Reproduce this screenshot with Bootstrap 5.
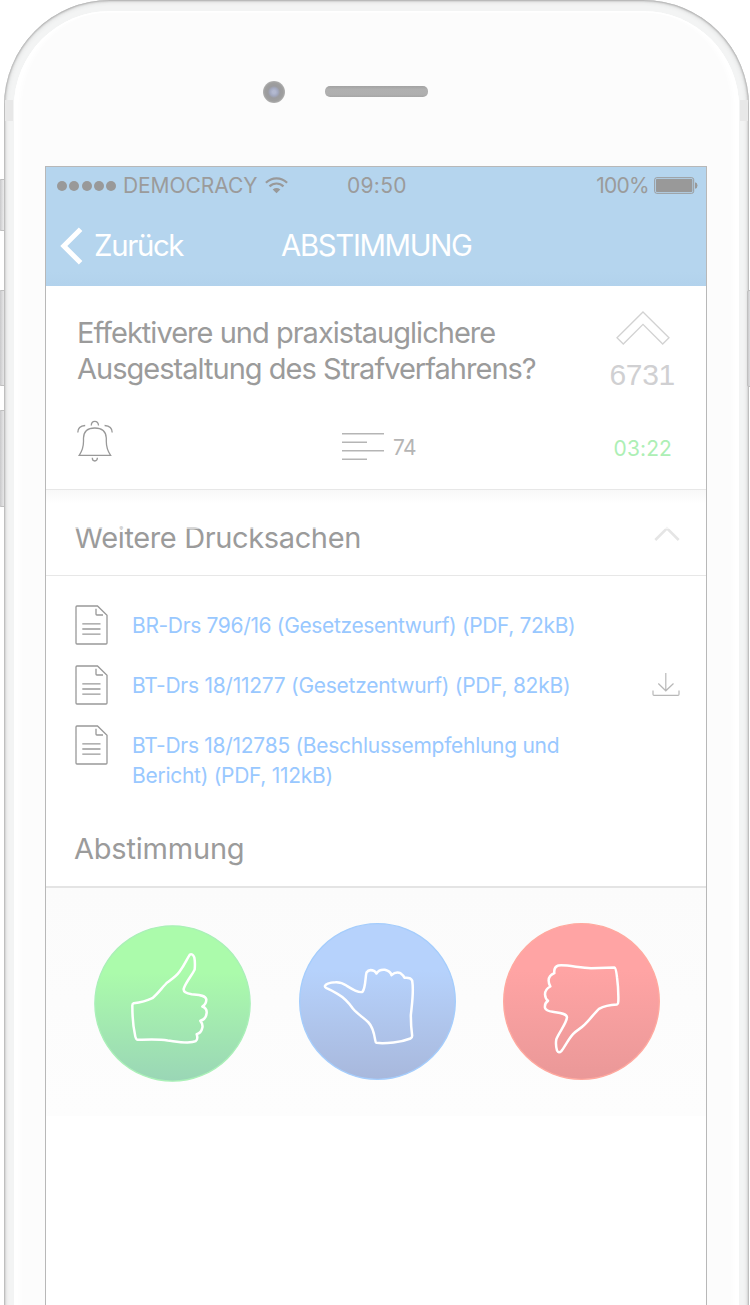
<!DOCTYPE html>
<html lang="de">
<head>
<meta charset="utf-8">
<meta name="viewport" content="width=device-width, initial-scale=1">
<title>Abstimmung</title>
<link rel="stylesheet" href="https://cdn.jsdelivr.net/npm/bootstrap@5.3.0/dist/css/bootstrap.min.css">
<style>
body{font-family:Inter,"Liberation Sans",sans-serif;font-weight:400;color:#9b9b9b;background:#fff;height:1305px;overflow:hidden}
.stage{height:1305px}
.phone{margin:0 1px 0 4px;height:1330px;border-radius:106px 106px 0 0;padding:11px 10px 0;background:#f3f4f4;
 box-shadow:inset 2px 0 2px -1px #b5b5b5,inset -2px 0 2px -1px #b5b5b5,inset 0 2px 2px -1px #b0b0b0,inset 0 0 5px 1px #d2d3d3}
.face{height:1319px;border-radius:96px 96px 0 0;background:#fcfcfc;padding:0 32px 0 31px;box-shadow:inset 0 0 0 1.5px #fff,inset 9px 0 5px -3px #fff,inset -9px 0 5px -3px #fff}
.optics{height:155px;padding:70px 0 0 218px;gap:40px}
.camera{width:22px;height:22px;border-radius:50%;background:radial-gradient(circle,#b3b9d0 0 1.5px,#a2a8bf 4px,#9b9b9e 6px,#9e9e9e 9px,#b0b0b0 11px)}
.speaker{width:103px;height:11px;border-radius:5px;margin-top:5px;background:linear-gradient(#a2a2a2,#b0b0b0 30%,#afafaf 75%,#a6a6a6)}
.band{top:100px;width:8px;height:21px;background:#e8e8e8}
.key{background:linear-gradient(90deg,#c9c9cb,#dededf 45%,#e9e9ea 75%,#bcbcbc);border:1px solid #c0c0c0;border-radius:2px}
.screen{height:1165px;border:1px solid #b8b8b8;border-bottom:0;background:#fff}
.topbar{height:119px;background:linear-gradient(#b5d5ee 0 88%,#b2d2ec)}
.status{height:36px;font-size:21px;line-height:36px;padding:1px 8px 0 11px}
.status-left{width:290px}
.dots{gap:2.35px;margin-right:6.5px}
.dots i{width:10px;height:10px;border-radius:50%;background:#999}
.carrier{letter-spacing:-.034px}
.clock{letter-spacing:.3px}
.percent{letter-spacing:-.7px;margin-right:5px}
.navi{height:83px;padding:2px 0 0 14px;font-size:29.3px;color:#fff}
.back{width:221px;color:#fff;letter-spacing:-1.3px;gap:10px}
.heading{letter-spacing:-1.3px}
.summary{height:203px}
.summary-top{height:110px;padding:25px 29px 0 31px}
.question{font-size:29px;line-height:36px;padding-top:4px;letter-spacing:-.98px}
.votes{font:30px/34px "Liberation Sans",sans-serif;color:#d0d0d2;margin-top:13px;letter-spacing:-.3px;margin-right:2px}
.summary-bottom{padding:24px 34px 0 31px;font-size:21px}
.comments{color:#b5b5b5;line-height:32px;margin:12px 0 0 229px;gap:8px;letter-spacing:-.6px}
.left-time{color:#adefb5;line-height:32px;margin-top:13px;letter-spacing:.1px}
.acc-head{height:87px;border-top:1px solid #e7e7e7;border-bottom:1px solid #e7e7e7;padding:11px 26px 0 28.5px;font-size:29px;letter-spacing:-.37px;background:linear-gradient(#f8f8f8,#fff 13px)}
.acc-head::before{content:"";position:absolute;left:0;right:0;top:14px;height:25px;background:linear-gradient(#fff8,#fff9)}
.docs{height:239px;padding:29px 26px 0 29px}
.doc{min-height:60px;font-size:21px;line-height:30px;letter-spacing:-.28px;gap:24px}
.doc a{color:#99c8ff;padding-top:5.5px}
.doc svg{flex:none}
.vote-head{height:73px;border-bottom:2px solid #e4e4e4;padding:0 28px 4px;font-size:29px;letter-spacing:-.2px}
.ballot{height:228px;background:linear-gradient(#fbfbfb,#fdfdfd);padding:35px 0 0 48px;gap:47.7px}
.ballot button{width:157px;height:157px}
</style>
</head>
<body>
<div class="stage position-relative overflow-hidden">
  <span class="key position-absolute" style="left:-1px;top:179px;width:7px;height:52px"></span>
  <span class="key position-absolute" style="left:-1px;top:290px;width:8px;height:96px"></span>
  <span class="key position-absolute" style="left:-1px;top:410px;width:8px;height:97px"></span>
  <main class="phone position-relative">
    <span class="band position-absolute" style="left:1px"></span><span class="band position-absolute" style="right:1px"></span>
    <div class="face">
      <div class="optics d-flex"><span class="camera"></span><span class="speaker"></span></div>
      <div class="screen">
        <header class="topbar">
          <div class="status d-flex align-items-center">
            <div class="status-left d-flex align-items-center">
              <span class="dots d-flex"><i></i><i></i><i></i><i></i><i></i></span>
              <span class="carrier">DEMOCRACY</span>
              <svg style="margin-left:7px" width="23" height="17" viewBox="0 0 23 17" fill="none" stroke="#999" stroke-width="2.2"><path d="M.9 5.8Q5.5 1.3 11.5 1.3T22.1 5.8M4.5 9.4Q7.5 6.5 11.5 6.5T18.5 9.4"/><path d="M7.7 12.5Q11.5 9.6 15.3 12.5L11.5 16.3Z" fill="#999" stroke="none"/></svg>
            </div>
            <span class="clock">09:50</span>
            <span class="percent ms-auto">100%</span>
            <svg width="44" height="17" viewBox="0 0 44 17"><rect x=".7" y=".7" width="39" height="15.6" rx="2" fill="none" stroke="#999" stroke-width="1"/><rect x="2" y="2" width="36.4" height="13" rx=".8" fill="#999"/><path d="M41 5.3q2.5.4 2.5 3.2T41 11.7Z" fill="#999"/></svg>
          </div>
          <nav class="navi d-flex align-items-center">
            <a class="back d-flex align-items-center text-decoration-none" href="#"><svg width="24" height="38" viewBox="0 0 24 38" fill="none" stroke="#fff" stroke-width="5"><path d="M20.6 2.2 3.8 19 20.6 35.8"/></svg>Zurück</a>
            <span class="heading">ABSTIMMUNG</span>
          </nav>
        </header>
        <section class="summary">
          <div class="summary-top d-flex justify-content-between">
            <div class="question">Effektivere und praxistauglichere<br>Ausgestaltung des Strafverfahrens?</div>
            <div class="d-flex flex-column align-items-center">
              <svg width="54" height="34" viewBox="0 0 54 34" fill="none" stroke="#d2d2d2" stroke-width="1.3"><path d="M27 1 53 26.8 46.7 33 27 13.3 7.3 33 1 26.8Z"/></svg>
              <span class="votes">6731</span>
            </div>
          </div>
          <div class="summary-bottom d-flex align-items-start">
            <svg width="36" height="42" viewBox="0 0 36 42" fill="none" stroke="#999" stroke-width="1.3"><path d="M2.2 35.3Q6.5 29 6.5 21.5V18Q6.8 8 17.8 8T29.3 18V21.5Q29.3 29 33.6 35.3ZM14.3 5.5Q14.3 1.3 17.8 1.3T21.5 5.5M15.3 37.8Q15.3 41 17.8 41T20.4 37.8M.8 12.5Q.8 6 8.2 5.5M35.2 12.5Q35.2 6 27.6 5.5"/></svg>
            <div class="comments d-flex"><svg width="43" height="30" viewBox="0 0 43 30" stroke="#b5b5b5" stroke-width="1.5"><path d="M0 1.8H42M0 10.3H25M0 18.8H42M0 27.3H25"/></svg>74</div>
            <span class="left-time ms-auto">03:22</span>
          </div>
        </section>
        <div class="acc-head position-relative d-flex align-items-center justify-content-between">Weitere Drucksachen
          <svg class="mb-2" width="26" height="16" viewBox="0 0 26 16" fill="none" stroke="#e5e5e5" stroke-width="2.6"><path d="M1.3 14 13 2.3 24.7 14"/></svg>
        </div>
        <svg class="position-absolute" width="0" height="0"><symbol id="sheet" viewBox="0 0 33 40"><path d="M2 1H22.5L32 10.3V38Q32 39 31 39H2Q1 39 1 38V2Q1 1 2 1ZM21 3.7V9.2Q21 10 21.8 10H28M7.3 18.8H25.5M7.3 24H25.5M7.3 29.2H25.5" fill="none" stroke="#999" stroke-width="1.3"/></symbol></svg>
        <div class="docs">
          <div class="doc d-flex align-items-start"><svg width="33" height="40"><use href="#sheet"/></svg><a class="text-decoration-none" href="#" style="letter-spacing:-.35px">BR-Drs 796/16 (Gesetzesentwurf) (PDF, 72kB)</a></div>
          <div class="doc d-flex align-items-start"><svg width="33" height="40"><use href="#sheet"/></svg><a class="text-decoration-none" href="#" style="letter-spacing:-.27px">BT-Drs 18/11277 (Gesetzentwurf) (PDF, 82kB)</a>
            <svg class="ms-auto mt-2" width="28" height="24" viewBox="0 0 28 24" fill="none" stroke="#b8b8b8" stroke-width="1.2"><path d="M13.8 0V17.5M6.3 10.5 13.8 17.8 21.5 10.5M1 17.5V21.2Q1 22.3 2 22.3H26Q27 22.3 27 21.2V17.5"/></svg></div>
          <div class="doc d-flex align-items-start"><svg width="33" height="40"><use href="#sheet"/></svg><a class="text-decoration-none" href="#">BT-Drs 18/12785 (Beschlussempfehlung und<br>Bericht) (PDF, 112kB)</a></div>
        </div>
        <div class="vote-head d-flex align-items-center">Abstimmung</div>
        <svg class="position-absolute" width="0" height="0"><defs>
          <linearGradient id="g1" x2="0" y2="1"><stop offset=".3" stop-color="#abfbab"/><stop offset="1" stop-color="#9ad6b6"/></linearGradient>
          <linearGradient id="g2" x2="0" y2="1"><stop offset=".3" stop-color="#b6d2fc"/><stop offset="1" stop-color="#a8b8dc"/></linearGradient>
          <linearGradient id="g3" x2="0" y2="1"><stop offset=".3" stop-color="#ffa4a4"/><stop offset="1" stop-color="#ea9898"/></linearGradient>
        </defs></svg>
        <div class="ballot d-flex">
          <button class="btn p-0 border-0 d-flex" style="margin-top:2px" aria-label="Zustimmen"><svg width="157" height="157" viewBox="27 44.5 471 471"><circle cx="262.5" cy="280" r="233" fill="url(#g1)" stroke="#aaf0b8" stroke-width="4"/><path d="M146 279Q178 276 202 264C220 250 234 228 248 216C266 203 274 198 284 184C299 164 306 146 314 134Q322 128 328 142Q331 158 329 178C322 194 302 216 296 236Q294 248 320 252C340 254 362 254 364 268Q364 282 352 289Q366 294 365 308Q363 328 346 332Q356 344 351 356Q348 368 335 372Q340 388 332 393C314 402 280 395 248 391C220 386 190 388 158 389Q152 388 150 374Q142 338 142 286Q142 280 146 279Z" fill="none" stroke="#fff" stroke-width="7.5" stroke-linejoin="round"/></svg></button>
          <button class="btn p-0 border-0 d-flex" aria-label="Enthalten"><svg width="157" height="157" viewBox="41.5 39.5 471 471"><circle cx="277" cy="275" r="233.5" fill="url(#g2)" stroke="#a5cdfc" stroke-width="4"/><path d="M119 229Q123 218 151 217Q168 216 185 228C207 242 224 250 232 246C242 232 240 202 244 188Q252 176 268 184Q273 188 274 191Q282 178 299 180Q316 184 319 196Q332 184 346 190Q355 196 358 204Q376 202 381 212C387 248 379 292 377 316Q377 350 381 378Q381 384 376 386Q350 396 325 398C305 400 290 401 274 399Q271 398 270 390Q264 352 250 338C236 324 216 312 203 296C192 280 178 264 157 252Q138 241 124 235Q119 232 119 229Z" fill="none" stroke="#fff" stroke-width="7.5" stroke-linejoin="round"/></svg></button>
          <button class="btn p-0 border-0 d-flex" aria-label="Ablehnen"><svg width="157" height="157" viewBox="40 39.5 471 471"><circle cx="275.5" cy="275" r="233.5" fill="url(#g3)" stroke="#ffa99f" stroke-width="4"/><path d="M374 173Q342 174 304 175C270 174 230 164 206 167Q192 171 194 190Q176 198 177 213Q177 222 182 230Q166 238 166 254Q167 267 175 273Q164 280 166 294Q169 303 189 306C208 309 230 310 232 322C231 340 209 366 200 388Q197 404 202 422Q207 432 215 424C225 412 236 388 250 373C262 360 274 356 284 345C300 330 314 310 328 297Q348 286 382 284Q386 282 386 274Q387 240 382 202Q379 174 374 173Z" fill="none" stroke="#fff" stroke-width="7.5" stroke-linejoin="round"/></svg></button>
        </div>
      </div>
    </div>
  </main>
  <span class="key position-absolute" style="left:747px;top:290px;width:6px;height:97px"></span>
</div>
<script src="https://cdn.jsdelivr.net/npm/bootstrap@5.3.0/dist/js/bootstrap.bundle.min.js"></script>
</body>
</html>
